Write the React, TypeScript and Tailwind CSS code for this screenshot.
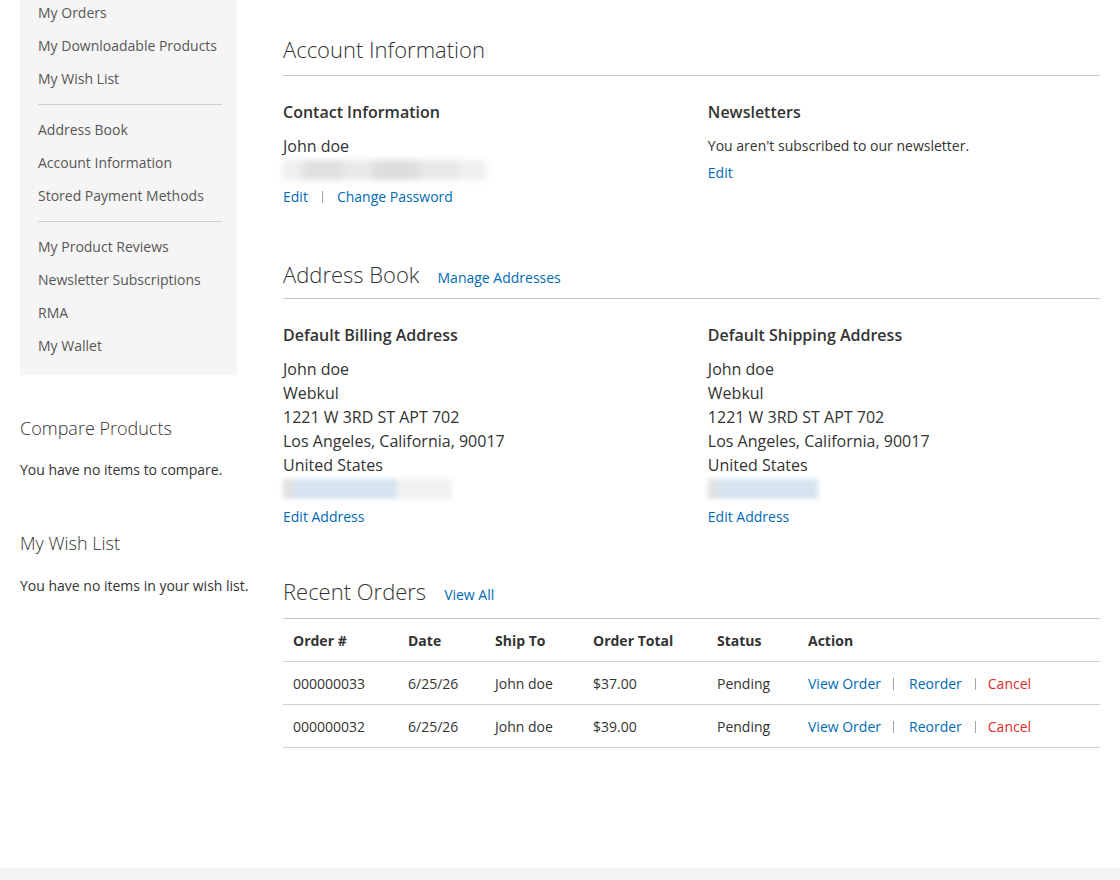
import React from 'react';

const navGroups = [
  ['My Orders', 'My Downloadable Products', 'My Wish List'],
  ['Address Book', 'Account Information', 'Stored Payment Methods'],
  ['My Product Reviews', 'Newsletter Subscriptions', 'RMA', 'My Wallet'],
];

const orders = [
  { id: '000000033', date: '6/25/26', shipTo: 'John doe', total: '$37.00', status: 'Pending' },
  { id: '000000032', date: '6/25/26', shipTo: 'John doe', total: '$39.00', status: 'Pending' },
];

const address = ['John doe', 'Webkul', '1221 W 3RD ST APT 702', 'Los Angeles, California, 90017', 'United States'];

function Sep({ className = '' }: { className?: string }) {
  return <span className={`inline-block w-px h-[12px] bg-[#a6a6a6] align-middle ${className}`} />;
}

function BlockTitle({ title, link, pb = 'pb-[11px]' }: { title: string; link?: string; pb?: string }) {
  return (
    <div className={`flex items-baseline border-b border-[#c6c6c6] ${pb}`}>
      <h2 className="text-[22px] font-light leading-[28px] text-[#333]">{title}</h2>
      {link && <a className="ml-[18px] text-[14px] text-[#006bb4]">{link}</a>}
    </div>
  );
}

// masked phone number, pixelated and soft
function MaskedPhone({ wide }: { wide?: boolean }) {
  return (
    <div className="h-[24px] flex items-center blur-[2px]">
      <div className="flex h-[20px] items-stretch">
        <div className="w-[10px] bg-[#e2e2e2]" />
        <div className={`${wide ? 'w-[104px]' : 'w-[100px]'} bg-[#d6e4f1]`} />
        {wide && <div className="w-[55px] bg-[#f1f1f1]" />}
      </div>
    </div>
  );
}

function AddressBox({ title }: { title: string }) {
  return (
    <div className="w-[48%]">
      <h3 className="text-[16px] font-semibold leading-[24px] text-[#333]">{title}</h3>
      <div className="mt-[10px] text-[16px] leading-[24px] text-[#333]">
        {address.map((l) => (
          <div key={l}>{l}</div>
        ))}
        <MaskedPhone wide={title.includes('Billing')} />
      </div>
      <a className="block mt-[6px] text-[14px] leading-[20px] text-[#006bb4]">Edit Address</a>
    </div>
  );
}

const cell = 'px-[10px] pt-[12px] pb-[10px]';

export default function App() {
  return (
    <div className="h-[880px] flex flex-col bg-white text-[#333]" style={{ fontFamily: '"Open Sans", "Liberation Sans", sans-serif' }}>
      <div className="flex-1 flex px-[20px] overflow-hidden">
        {/* sidebar */}
        <aside className="w-[241px] shrink-0">
          <nav className="w-[217px] bg-[#f5f5f5] pb-[13px] overflow-hidden">
            <ul className="-mt-[4px]">
              {navGroups.map((group, gi) => (
                <li key={gi}>
                  {gi > 0 && <div className="ml-[18px] mr-[15px] mt-[9px] mb-[8px] h-px bg-[#d1d1d1]" />}
                  {group.map((item) => (
                    <div key={item} className="h-[33px] flex items-center pl-[18px] text-[14px] text-[#575757]">
                      {item}
                    </div>
                  ))}
                </li>
              ))}
            </ul>
          </nav>

          <div className="mt-[41px]">
            <h2 className="text-[18px] font-light leading-[24px]">Compare Products</h2>
            <p className="mt-[20px] text-[14px] leading-[20px] whitespace-nowrap">You have no items to compare.</p>
          </div>
          <div className="mt-[51px]">
            <h2 className="text-[18px] font-light leading-[24px]">My Wish List</h2>
            <p className="mt-[21px] text-[14px] leading-[20px] whitespace-nowrap">You have no items in your wish list.</p>
          </div>
        </aside>

        {/* main column */}
        <main className="flex-1 pl-[22px] pt-[35px]">
          <BlockTitle title="Account Information" pb="pb-[12px]" />
          <div className="flex justify-between mt-[24px]">
            <div className="w-[48%]">
              <h3 className="text-[16px] font-semibold leading-[24px]">Contact Information</h3>
              <div className="mt-[10px] text-[16px] leading-[24px]">
                <div>John doe</div>
                <div className="h-[24px] flex items-center blur-[3px]">
                  <div className="flex h-[20px]">
                    <div className="w-[20px] bg-[#eeeeee]" />
                    <div className="w-[40px] bg-[#e0e0e0]" />
                    <div className="w-[30px] bg-[#e9e9e9]" />
                    <div className="w-[45px] bg-[#dddddd]" />
                    <div className="w-[40px] bg-[#e7e7e7]" />
                    <div className="w-[28px] bg-[#efefef]" />
                  </div>
                </div>
              </div>
              <div className="mt-[5px] text-[14px] leading-[20px] flex items-center">
                <a className="text-[#006bb4]">Edit</a>
                <Sep className="ml-[14px] mr-[14px]" />
                <a className="text-[#006bb4]">Change Password</a>
              </div>
            </div>
            <div className="w-[48%]">
              <h3 className="text-[16px] font-semibold leading-[24px]">Newsletters</h3>
              <p className="mt-[12px] text-[14px] leading-[20px]">You aren't subscribed to our newsletter.</p>
              <a className="block mt-[7px] text-[14px] leading-[20px] text-[#006bb4]">Edit</a>
            </div>
          </div>

          <div className="mt-[53px]">
            <BlockTitle title="Address Book" link="Manage Addresses" pb="pb-[10px]" />
          </div>
          <div className="flex justify-between mt-[24px]">
            <AddressBox title="Default Billing Address" />
            <AddressBox title="Default Shipping Address" />
          </div>

          <div className="mt-[50px]">
            <BlockTitle title="Recent Orders" link="View All" pb="pb-[13px]" />
          </div>
          <table className="w-full text-[14px] leading-[20px] border-collapse">
            <thead>
              <tr className="border-b border-[#d1d1d1] text-left">
                <th className={`w-[115px] ${cell} font-bold`}>Order #</th>
                <th className={`w-[87px] ${cell} font-bold`}>Date</th>
                <th className={`w-[98px] ${cell} font-bold`}>Ship To</th>
                <th className={`w-[124px] ${cell} font-bold`}>Order Total</th>
                <th className={`w-[91px] ${cell} font-bold`}>Status</th>
                <th className={`${cell} font-bold`}>Action</th>
              </tr>
            </thead>
            <tbody>
              {orders.map((o) => (
                <tr key={o.id} className="border-b border-[#d1d1d1]">
                  <td className={cell}>{o.id}</td>
                  <td className={cell}>{o.date}</td>
                  <td className={cell}>{o.shipTo}</td>
                  <td className={cell}>{o.total}</td>
                  <td className={cell}>{o.status}</td>
                  <td className={cell}>
                    <div className="flex items-center">
                      <a className="text-[#006bb4]">View Order</a>
                      <Sep className="ml-[12px] mr-[15px]" />
                      <a className="text-[#006bb4]">Reorder</a>
                      <Sep className="ml-[13px] mr-[12px]" />
                      <a className="text-[#e02b27]">Cancel</a>
                    </div>
                  </td>
                </tr>
              ))}
            </tbody>
          </table>
        </main>
      </div>
      <footer className="h-[12px] bg-[#f4f4f4]" />
    </div>
  );
}
